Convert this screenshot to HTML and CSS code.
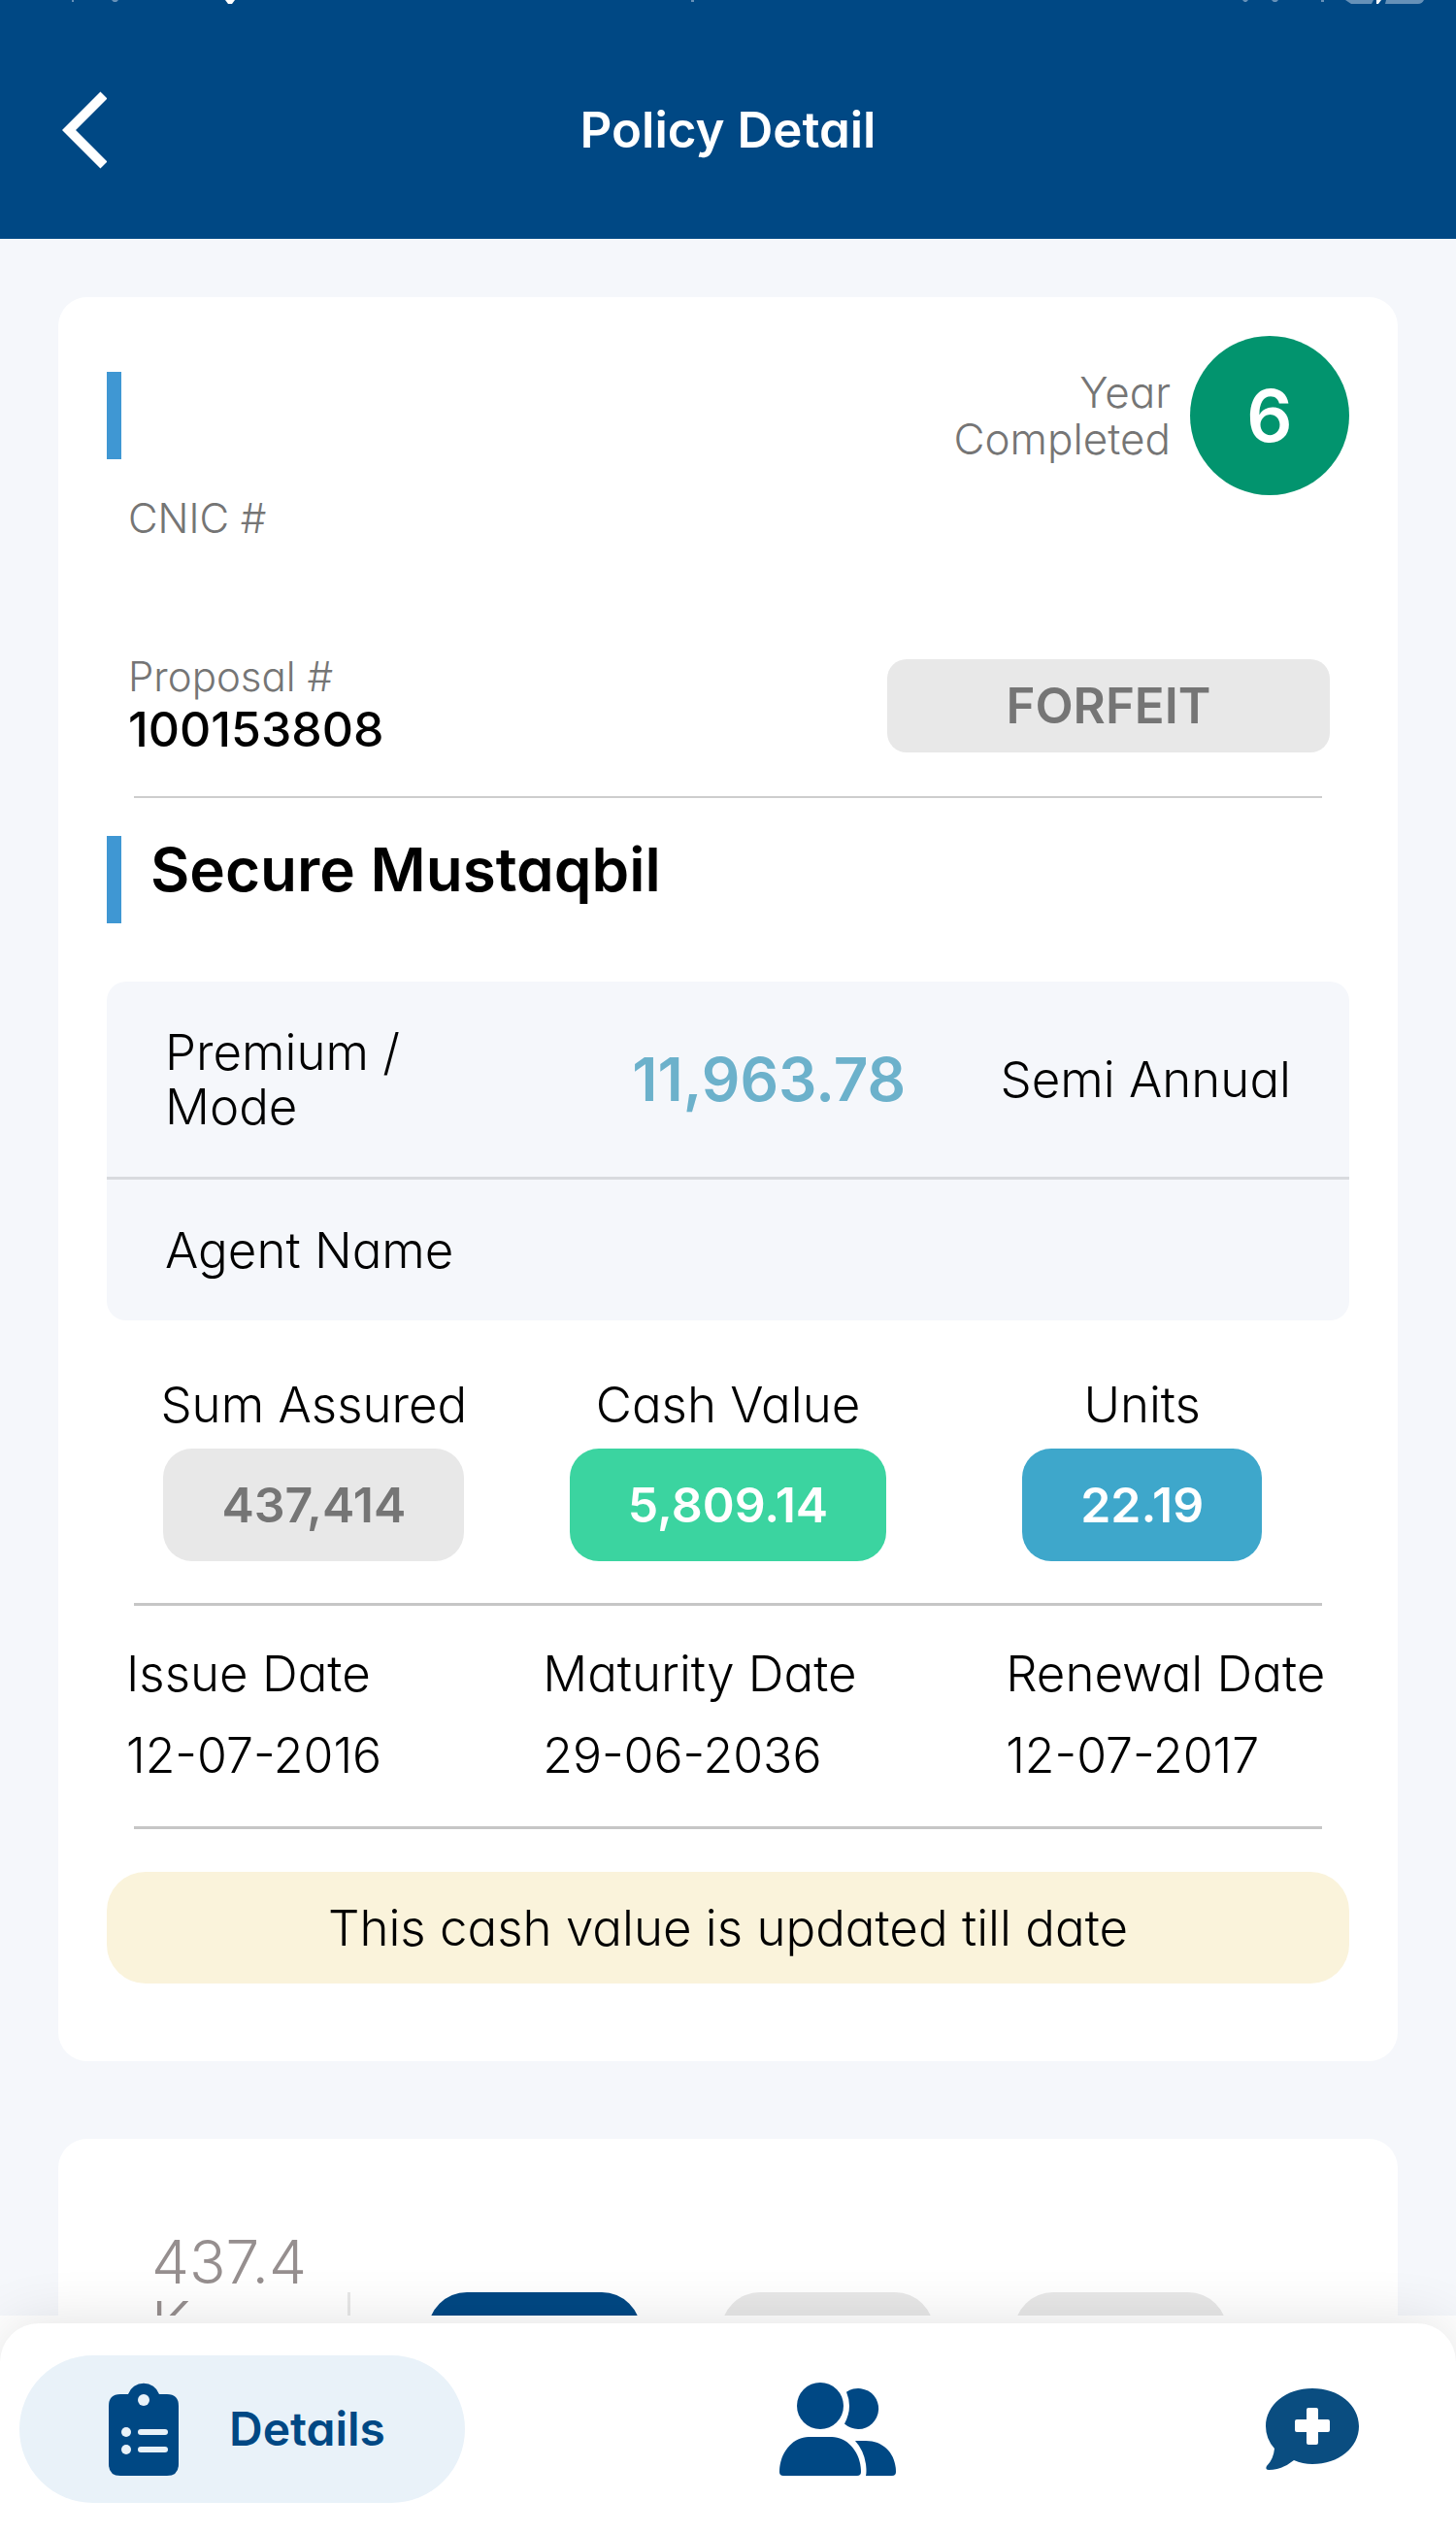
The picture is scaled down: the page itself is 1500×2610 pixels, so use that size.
FILE: index.html
```html
<!DOCTYPE html>
<html lang="en">
<head>
  <meta charset="UTF-8" />
  <meta name="viewport" content="width=device-width, initial-scale=1.0" />
  <title>Policy Detail</title>
  <link rel="stylesheet" href="styles.css">
</head>
<body>

  <header class="header">
    <svg class="status" viewBox="0 0 1500 4" aria-hidden="true">
      <path d="M232 0h10l-3 4h-4z" fill="#fff"/>
      <path d="M74 0h2v2h-2zM115 0h7l-2 2h-3zM712 0h3v2h-3zM1280 0h6l-2 2h-2zM1310 0h7l-2 2h-3zM1361 0h3v2h-3z" fill="#6691b8"/>
      <path d="M1386 0h29l-2 4h-21zM1428 0h39q-2 4-6 4h-34z" fill="#6691b8"/>
      <path d="M1418 0h5l-3 4h-2z" fill="#fff"/>
    </svg>
    <div class="header-bar">
      <button class="back" type="button" aria-label="Back">
        <svg width="46" height="80" viewBox="0 0 46 80"><path d="M43 4L7 40l36 36" fill="none" stroke="#fff" stroke-width="10"/></svg>
      </button>
      <h1>Policy Detail</h1>
    </div>
  </header>

  <main>
    <section class="card">
      <div class="top">
        <span class="bar"></span>
        <div class="years">
          <span>Year<br>Completed</span>
          <strong>6</strong>
        </div>
      </div>
      <div class="small cnic">CNIC #</div>

      <div class="proposal">
        <div>
          <div class="small">Proposal #</div>
          <div class="number">100153808</div>
        </div>
        <span class="tag">FORFEIT</span>
      </div>
      <hr>

      <div class="plan">
        <span class="bar"></span>
        <h2>Secure Mustaqbil</h2>
      </div>

      <div class="box">
        <div class="row">
          <span>Premium /<br>Mode</span>
          <strong>11,963.78</strong>
          <span>Semi Annual</span>
        </div>
        <div class="row agent">
          <span>Agent Name</span>
        </div>
      </div>

      <dl class="stats">
        <div>
          <dt>Sum Assured</dt>
          <dd class="gray">437,414</dd>
        </div>
        <div>
          <dt>Cash Value</dt>
          <dd class="green">5,809.14</dd>
        </div>
        <div>
          <dt>Units</dt>
          <dd class="blue">22.19</dd>
        </div>
      </dl>
      <hr class="dark">

      <dl class="dates">
        <div>
          <dt>Issue Date</dt>
          <dd>12-07-2016</dd>
        </div>
        <div>
          <dt>Maturity Date</dt>
          <dd>29-06-2036</dd>
        </div>
        <div>
          <dt>Renewal Date</dt>
          <dd>12-07-2017</dd>
        </div>
      </dl>
      <hr class="dark">

      <p class="note">This cash value is updated till date</p>
    </section>

    <section class="card chart">
      <div class="scale">437.4<br>K</div>
      <div class="columns">
        <span class="column active"></span>
        <span class="column"></span>
        <span class="column"></span>
      </div>
    </section>
  </main>

  <footer class="footer">
    <nav class="tabs">
      <a class="tab active" href="#details">
        <svg width="72" height="96" viewBox="0 0 72 96">
          <path d="M12 12h8a17 17 0 0 1 32 0h8q12 0 12 12v60q0 12-12 12h-48q-12 0-12-12v-60q0-12 12-12z" fill="#004884"/>
          <g fill="#e9f2f9">
            <circle cx="36" cy="18" r="6"/>
            <circle cx="18" cy="51" r="5"/>
            <circle cx="18" cy="69" r="5"/>
            <rect x="30" y="48" width="31" height="6" rx="3"/>
            <rect x="30" y="66" width="31" height="6" rx="3"/>
          </g>
        </svg>
        <span>Details</span>
      </a>
      <a class="tab" href="#people" aria-label="People">
        <svg width="120" height="96" viewBox="0 0 120 96" fill="#004884">
          <circle cx="42" cy="24" r="24"/>
          <path d="M69 9.8A21 21 0 1 1 67 42.5Q72 33 72 24Q72 17 69 9.8z"/>
          <path d="M0 92C0 72 14 56 30 56H54C70 56 84 72 84 92Q84 96 80 96H4Q0 96 0 92z"/>
          <path d="M78 60H89C108 60 120 74 120 92Q120 96 116 96H89Q90 92 89 84Q87 70 78 60z"/>
        </svg>
      </a>
      <a class="tab" href="#support" aria-label="Support">
        <svg width="96" height="84" viewBox="0 0 96 84">
          <path d="M48 0C75 0 96 17 96 39S75 78 48 78Q38 78 29 74Q17 84 3 84Q-1 84 1 80Q8 73 9 62Q0 52 0 39C0 17 21 0 48 0z" fill="#0a4d80"/>
          <path d="M44 20h8q2 0 2 2v10h10q2 0 2 2v9q0 2-2 2h-10v11q0 2-2 2h-8q-2 0-2-2v-11h-10q-2 0-2-2v-9q0-2 2-2h10v-10q0-2 2-2z" fill="#fff"/>
        </svg>
      </a>
    </nav>
  </footer>

</body>
</html>
```
FILE: styles.css
```css
* {
  box-sizing: border-box;
}

body {
  margin: 0;
  height: 100vh;
  display: flex;
  flex-direction: column;
  overflow: hidden;
  background: #f5f7fb;
  color: #000;
  font-family: Inter, "Open Sans", sans-serif;
  font-feature-settings: "cv11";
  font-size: 51px;
  font-weight: 300;
  line-height: 60px;
}

h1, h2, p, dl, dd {
  margin: 0;
}

/* header */
.header {
  background: #004884;
  color: #fff;
}

.status {
  display: block;
  width: 100%;
}

.header-bar {
  display: grid;
  grid-template-columns: 1fr auto 1fr;
  align-items: center;
  padding: 86px 60px 68px;
}

.back {
  justify-self: start;
  display: flex;
  padding: 4px;
  border: 0;
  background: none;
  cursor: pointer;
}

h1 {
  font-size: 51px;
  font-weight: 600;
}

/* content */
main {
  flex: 1;
  min-height: 0;
  overflow: hidden;
  padding: 60px 60px 0;
}

.card {
  background: #fff;
  border-radius: 30px;
  padding: 40px 50px 80px;
  margin-bottom: 80px;
}

.bar {
  width: 15px;
  height: 90px;
  background: #3f97d3;
}

.top {
  display: flex;
  justify-content: space-between;
  align-items: center;
}

.years {
  display: flex;
  align-items: center;
  gap: 20px;
  color: #757575;
  font-size: 44px;
  line-height: 48px;
  text-align: right;
}

.years strong {
  width: 164px;
  height: 164px;
  border-radius: 50%;
  background: #02946e;
  color: #fff;
  font-size: 74px;
  font-weight: 600;
  line-height: 164px;
  text-align: center;
}

.small {
  color: #757575;
  font-size: 42px;
  line-height: 48px;
}

.cnic {
  padding-left: 22px;
}

.proposal {
  display: flex;
  justify-content: space-between;
  align-items: center;
  margin-top: 115px;
  padding: 0 20px 0 22px;
}

.number {
  font-size: 50px;
  font-weight: 500;
}

.tag {
  width: 456px;
  border-radius: 20px;
  background: #e8e8e8;
  color: #757575;
  font-weight: 600;
  line-height: 96px;
  text-align: center;
}

hr {
  height: 2px;
  margin: 39px 28px;
  border: 0;
  background: #cdcdcd;
}

.dark {
  height: 3px;
  margin: 43px 28px 40px;
  background: #c6c6c6;
}

.plan {
  display: flex;
  gap: 30px;
}

h2 {
  font-size: 62px;
  font-weight: 600;
  line-height: 70px;
}

.box {
  margin-top: 60px;
  border-radius: 20px;
  background: #f5f7fb;
}

.row {
  display: grid;
  grid-template-columns: 384px 1fr auto;
  align-items: center;
  min-height: 201px;
  padding: 0 60px;
  line-height: 56px;
}

.row strong {
  color: #6cb1cb;
  font-size: 62px;
  font-weight: 600;
  text-align: center;
}

.agent {
  min-height: 148px;
  border-top: 3px solid #d8dade;
}

.stats {
  display: grid;
  grid-template-columns: repeat(3, 1fr);
  margin-top: 57px;
  text-align: center;
}

.stats dd {
  display: inline-block;
  margin-top: 15px;
  padding: 0 60px;
  border-radius: 30px;
  font-size: 50px;
  font-weight: 600;
  line-height: 116px;
}

.gray {
  background: #e8e8e8;
  color: #757575;
}

.green {
  background: #3bd4a0;
  color: #fff;
}

.blue {
  background: #3ea7cb;
  color: #fff;
}

.dates {
  display: grid;
  grid-template-columns: 9fr 10fr 7fr;
  padding: 0 20px;
}

.dates dd {
  margin-top: 24px;
  font-size: 50px;
}

.note {
  margin-top: 44px;
  border-radius: 40px;
  background: #faf3db;
  line-height: 115px;
  text-align: center;
}

/* chart */
.chart {
  display: flex;
  padding: 95px 96px;
}

.scale {
  width: 202px;
  color: #968f8f;
  font-size: 62px;
  line-height: 63px;
}

.columns {
  display: flex;
  gap: 83px;
  height: 600px;
  margin-top: 63px;
  padding-left: 80px;
  border-left: 3px solid #e8e8e8;
}

.column {
  width: 219px;
  border-radius: 40px;
  background: #e8e8e8;
}

.column.active {
  background: #004884;
}

/* bottom tabs */
.footer {
  position: relative;
  padding-top: 8px;
  background: #fff;
}

.tabs {
  display: flex;
  justify-content: space-between;
  align-items: center;
  padding: 33px 44px 32px 20px;
  border-radius: 40px 40px 0 0;
  background: #fff;
  box-shadow: 0 0 60px rgba(0, 0, 0, 0.12);
}

.tab {
  display: flex;
  align-items: center;
  gap: 52px;
  height: 152px;
  padding: 0 56px;
  color: #004884;
  font-size: 48px;
  font-weight: 600;
  text-decoration: none;
}

.tab.active {
  padding: 0 82px 0 92px;
  border-radius: 76px;
  background: #e9f2f9;
}
```
